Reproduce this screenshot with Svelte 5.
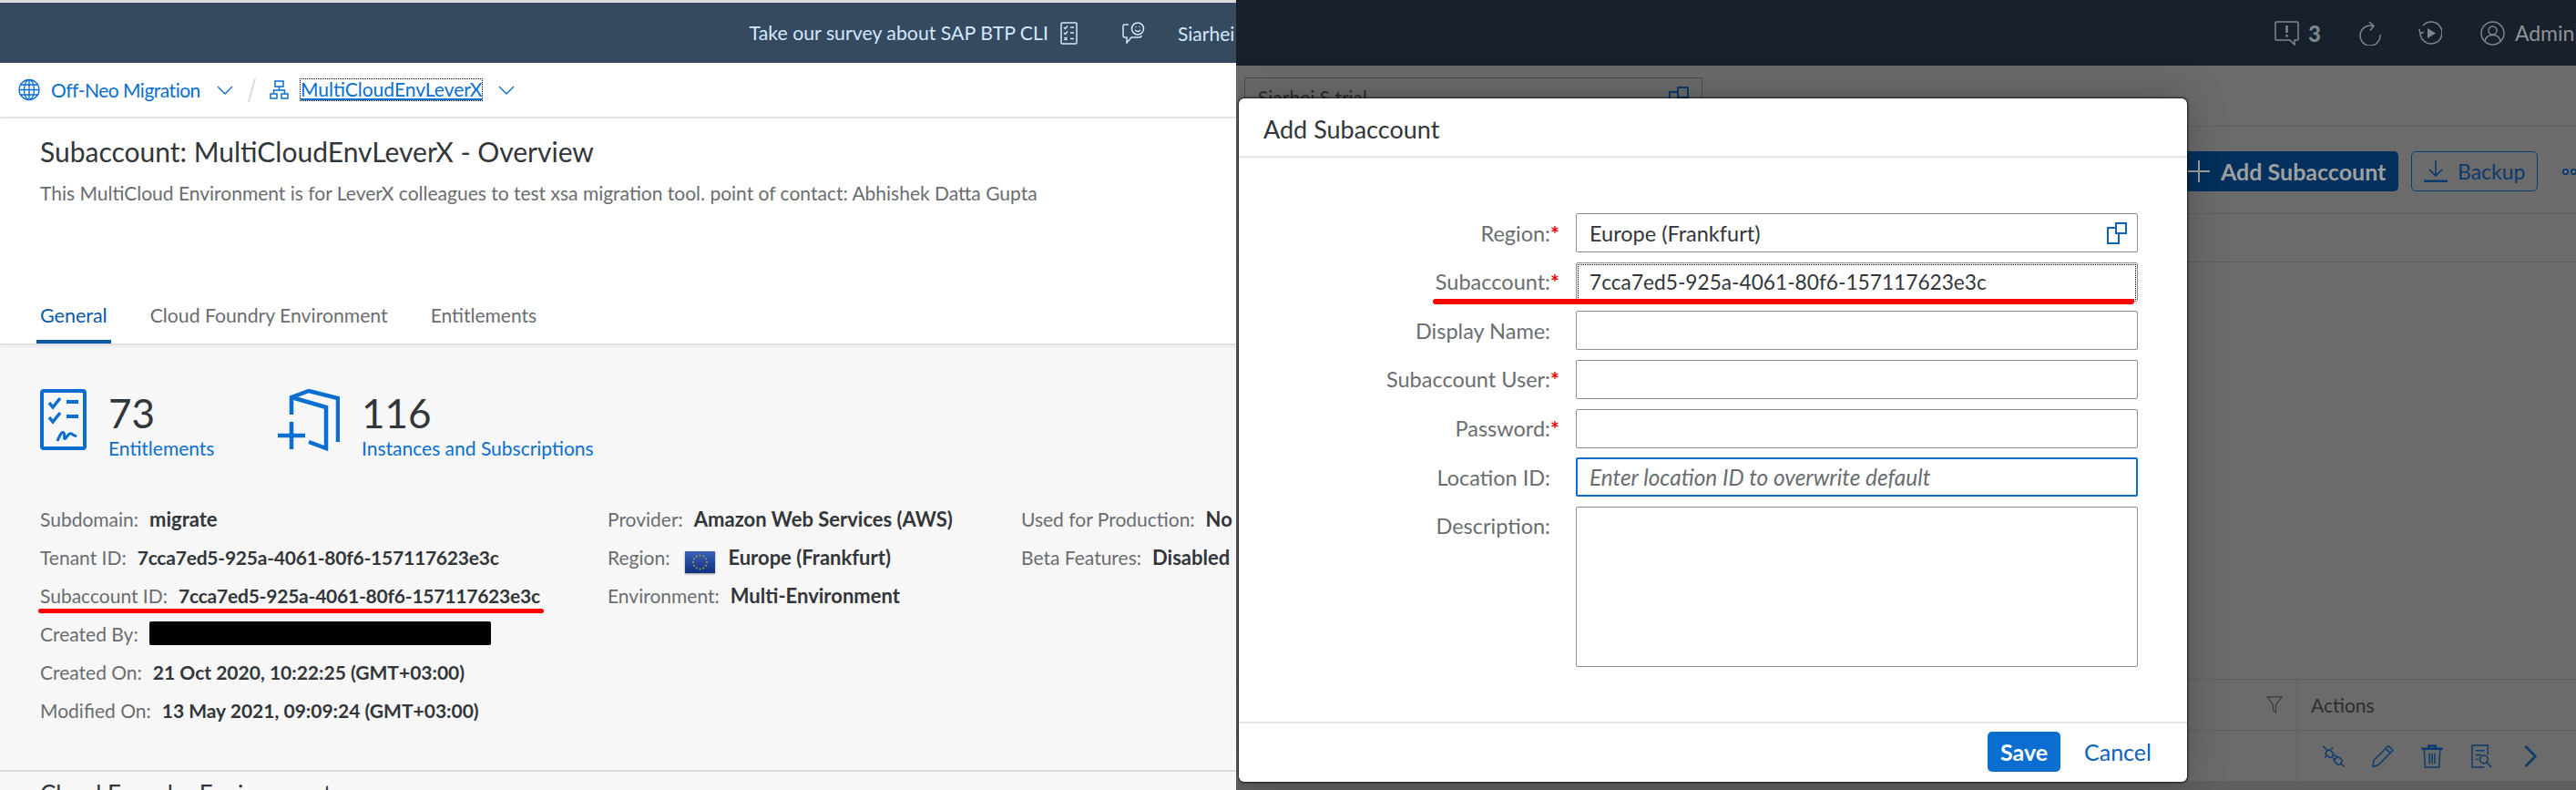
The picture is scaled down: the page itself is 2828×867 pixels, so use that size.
<script lang="ts">
  const stats = [
    { value: '73', label: 'Entitlements', kind: 'list' },
    { value: '116', label: 'Instances and Subscriptions', kind: 'book' },
  ];

  const col1 = [
    ['Subdomain:', 'migrate'],
    ['Tenant ID:', '7cca7ed5-925a-4061-80f6-157117623e3c'],
    ['Subaccount ID:', '7cca7ed5-925a-4061-80f6-157117623e3c'],
    ['Created By:', ''],
    ['Created On:', '21 Oct 2020, 10:22:25 (GMT+03:00)'],
    ['Modified On:', '13 May 2021, 09:09:24 (GMT+03:00)'],
  ];

  const col2 = [
    ['Provider:', 'Amazon Web Services (AWS)'],
    ['Region:', 'Europe (Frankfurt)'],
    ['Environment:', 'Multi-Environment'],
  ];

  const col3 = [
    ['Used for Production:', 'No'],
    ['Beta Features:', 'Disabled'],
  ];

  const fields = [
    { label: 'Region:', req: true, value: 'Europe (Frankfurt)', help: true },
    { label: 'Subaccount:', req: true, value: '7cca7ed5-925a-4061-80f6-157117623e3c', focus: true },
    { label: 'Display Name:' },
    { label: 'Subaccount User:', req: true },
    { label: 'Password:', req: true },
    { label: 'Location ID:', placeholder: 'Enter location ID to overwrite default', active: true },
  ];

  const stars = Array.from({ length: 12 }, (_, i) => {
    const a = (i / 12) * Math.PI * 2;
    return { x: 16.5 + Math.cos(a) * 7.5, y: 12 + Math.sin(a) * 7.5 };
  });

  const isHex = (v: string) => v.startsWith('7cca');
</script>

<div class="page">
  <section class="left">
    <header class="shell">
      <span class="survey">Take our survey about SAP BTP CLI</span>
      <svg class="survey-icon" viewBox="0 0 19 25" fill="none" stroke="currentColor" stroke-width="1.5">
        <rect x="1" y="1" width="17" height="23" rx="1" />
        <path d="M4 6l1.5 1.5L8 4.500M11 6h4M4 12l1.500 1.500L8 10.500M11 12h4M4.500 17l3 3M7.500 17l-3 3M11 18.500h4" />
      </svg>
      <svg class="feedback-icon" viewBox="0 0 26 24" fill="none" stroke="currentColor" stroke-width="1.5">
        <path d="M7 3H2.500Q1 3 1 4.500v11Q1 17 2.500 17H5v6l5-6h9q2 0 2-2" />
        <circle cx="17" cy="7.500" r="6.500" />
        <path d="M14 9q3 3 6 0M14.500 5.500h1M18.500 5.500h1" />
      </svg>
      <span class="user">Siarhei S</span>
    </header>

    <nav class="crumbs">
      <svg class="globe" viewBox="0 0 24 24" fill="none" stroke="#0a6ed1" stroke-width="1.300">
        <circle cx="12" cy="12" r="11" />
        <ellipse cx="12" cy="12" rx="5.500" ry="11" />
        <path d="M1 12h22M2.500 6.500h19M2.500 17.500h19M12 1v22" />
      </svg>
      <a class="crumb first">Off-Neo Migration</a>
      <svg class="chev" viewBox="0 0 18 10" fill="none" stroke="#0a6ed1" stroke-width="1.300"><path d="M1 1l8 8 8-8" /></svg>
      <svg class="slash" viewBox="0 0 9 26" fill="none" stroke="#dcdcdc" stroke-width="2"><path d="M8 0L1 26" /></svg>
      <svg class="tree" viewBox="0 0 21 21" fill="none" stroke="#0a6ed1" stroke-width="1.500">
        <rect x="6" y="1" width="9" height="6" />
        <rect x="1" y="15" width="7" height="5" />
        <rect x="13" y="15" width="7" height="5" />
        <path d="M10.500 7v4M4.500 15v-4h12v4" />
      </svg>
      <a class="crumb current">MultiCloudEnvLeverX</a>
      <svg class="chev" viewBox="0 0 18 10" fill="none" stroke="#0a6ed1" stroke-width="1.300"><path d="M1 1l8 8 8-8" /></svg>
    </nav>

    <div class="hero">
      <h1>Subaccount: MultiCloudEnvLeverX - Overview</h1>
      <p>This MultiCloud Environment is for LeverX colleagues to test xsa migration tool. point of contact: Abhishek Datta Gupta</p>
      <div class="tabs">
        <span class="tab on">General</span>
        <span class="tab">Cloud Foundry Environment</span>
        <span class="tab">Entitlements</span>
      </div>
    </div>

    <main class="general">
      <div class="stats">
        {#each stats as s}
          <div class="stat">
            {#if s.kind === 'list'}
              <svg class="stat-icon list" viewBox="0 0 51 67" fill="none" stroke="#0a6ed1" stroke-width="4">
                <rect x="2" y="2" width="47" height="63" rx="2" />
                <path stroke-width="3.500" d="M10 15l4 5 8-10M10 31l4 5 8-10" />
                <path d="M29 14h13M29 30h13" />
                <path stroke-width="3" d="M19 57c3-7 5-11 7-9s-1 8 2 6c3-4 5-7 8-4l4 2" />
              </svg>
            {:else}
              <svg class="stat-icon book" viewBox="0 0 68 68" fill="none" stroke="#0a6ed1" stroke-width="4.500">
                <path d="M15 28V9L34 2l32 8v48M15 9l38 11v45l-19-7" />
                <path d="M0 51h30M15 36v30" />
              </svg>
            {/if}
            <div class="stat-text">
              <span class="num">{s.value}</span>
              <a class="stat-link">{s.label}</a>
            </div>
          </div>
        {/each}
      </div>

      <div class="details">
        <div class="col">
          {#each col1 as [k, v]}
            <div class="row">
              <span class="key">{k}</span>
              {#if k === 'Created By:'}
                <span class="redacted"></span>
              {:else}
                <span class="val" class:hex={isHex(v)} class:word={v === 'migrate'}>{v}</span>
              {/if}
              {#if k === 'Subaccount ID:'}<i class="redline one"></i>{/if}
            </div>
          {/each}
        </div>
        <div class="col">
          {#each col2 as [k, v]}
            <div class="row">
              <span class="key">{k}</span>
              {#if k === 'Region:'}
                <svg class="flag" viewBox="0 0 33 24">
                  <defs>
                    <linearGradient id="eu" x1="0" y1="0" x2="0" y2="1">
                      <stop offset="0" stop-color="#3a62b8" />
                      <stop offset="1" stop-color="#10307f" />
                    </linearGradient>
                  </defs>
                  <rect width="33" height="24" fill="url(#eu)" />
                  {#each stars as st}<circle cx={st.x} cy={st.y} r="0.900" fill="#b0a844" />{/each}
                </svg>
              {/if}
              <span class="val word">{v}</span>
            </div>
          {/each}
        </div>
        <div class="col">
          {#each col3 as [k, v]}
            <div class="row">
              <span class="key">{k}</span>
              <span class="val word">{v}</span>
            </div>
          {/each}
        </div>
      </div>
    </main>

    <h2 class="next">Cloud Foundry Environment</h2>
  </section>

  <section class="right">
    <header class="cockpit">
      <svg class="c-icon" viewBox="0 0 27 27" fill="none" stroke="currentColor" stroke-width="1.500">
        <path d="M2 1h23q1 0 1 1v18q0 1-1 1h-3v5l-5-5H2q-1 0-1-1V2q0-1 1-1z" />
        <path stroke-width="2.500" d="M13.500 5v8M13.500 15v2.500" />
      </svg>
      <b class="count">3</b>
      <svg class="c-icon refresh" viewBox="0 0 25 27" fill="none" stroke="currentColor" stroke-width="1.500">
        <path d="M16 5.500A11 11 0 1 0 24 15M12 1l5 4.500-4 5" />
      </svg>
      <svg class="c-icon play" viewBox="0 0 26 27" fill="none" stroke="currentColor" stroke-width="1.500">
        <path d="M5 5a12 12 0 1 1-3 9M1 9l1 5 4-2" />
        <path fill="currentColor" stroke="none" d="M10 8l9 5.500-9 5.500z" />
      </svg>
      <svg class="c-icon who" viewBox="0 0 27 27" fill="none" stroke="currentColor" stroke-width="1.500">
        <circle cx="13.500" cy="13.500" r="12.500" />
        <circle cx="13.500" cy="10.500" r="4.500" />
        <path d="M5 22c1-5 4-6.500 8.500-6.500S21 17 22 22" />
      </svg>
      <span class="admin">Administrator</span>
    </header>

    <div class="strip title-strip">
      <div class="ghost-input">
        <span>Siarhei S trial</span>
        <svg viewBox="0 0 24 24" fill="none" stroke="#0b3a6c" stroke-width="2"><rect x="12" y="1" width="11" height="11" /><path d="M12 6H3v17h12V12" /></svg>
      </div>
    </div>

    <div class="strip toolbar">
      <button class="primary">
        <svg viewBox="0 0 24 24" fill="none" stroke="#a0a0a0" stroke-width="2"><path d="M0 12h24M12 0v24" /></svg>
        Add Subaccount
      </button>
      <button class="ghost">
        <svg viewBox="0 0 26 24" fill="none" stroke="#0b3a6c" stroke-width="1.600"><path d="M13 0v16M6 10l7 7 7-7" /><path stroke-width="3" d="M0 23h26" /></svg>
        Backup
      </button>
      <span class="dots"><i></i><i></i></span>
    </div>

    <div class="strip filler"></div>

    <div class="strip tall"></div>

    <div class="strip thead">
      <svg class="filter" viewBox="0 0 18 19" fill="none" stroke="#3c3c3c" stroke-width="1.200"><path d="M.8.800h16.400L10.500 9.500V18L7.500 15V9.500z" /></svg>
      <span class="cell head">Actions</span>
    </div>

    <div class="strip trow">
      <span class="cell acts">
        <svg viewBox="0 0 24 25" fill="none" stroke="#0b3a6c" stroke-width="1.500">
          <path d="M0 1l5 5" />
          <rect x="3.500" y="6.500" width="8" height="6.500" rx="2.500" transform="rotate(40 7.500 9.750)" />
          <path d="M2 14l2-2M9 5l2-2" />
          <rect x="13" y="14" width="8" height="7" rx="3" transform="rotate(40 17 17.500)" />
          <path d="M13 11l2 2M11 14l2 2M20 21l4 3" />
        </svg>
        <svg viewBox="0 0 24 25" fill="none" stroke="#0b3a6c" stroke-width="1.500">
          <path d="M18 1l5 5L7 22l-6 2 1-7zM15 4l5 5" />
        </svg>
        <svg viewBox="0 0 24 27" fill="none" stroke="#0b3a6c" stroke-width="1.500">
          <path stroke-width="2.500" d="M0 5h24M8 4V1.500h8V4" />
          <path d="M3 6l1 20h16l1-20M9 10v12M12 10v12M15 10v12" />
        </svg>
        <svg viewBox="0 0 23 27" fill="none" stroke="#0b3a6c" stroke-width="1.500">
          <path d="M19 12V1H1v25h14M5 7h10M5 12h6M5 17h3" />
          <circle cx="14.500" cy="17" r="4.500" />
          <path d="M18 20.500l5 5.500" />
        </svg>
        <svg class="go" viewBox="0 0 14 24" fill="none" stroke="#0b3a6c" stroke-width="2.500"><path d="M1.500 1l11 11-11 11" /></svg>
      </span>
    </div>

    <div class="strip tail"></div>

    <div class="modal">
      <div class="m-head">Add Subaccount</div>
      <form class="m-body">
        {#each fields as f}
          <label class="m-label" for={f.label}>{f.label}<span class="req">{f.req ? '*' : ''}</span></label>
          <div class="input" class:active={f.active} id={f.label}>
            {#if f.focus}<span class="focus-ring"></span>{/if}
            {#if f.placeholder}
              <span class="hint">{f.placeholder}</span>
            {:else if f.value}
              <span class:hexval={f.focus}>{f.value}</span>
            {/if}
            {#if f.help}
              <svg class="help" viewBox="0 0 24 24" fill="none" stroke="#0a62ba" stroke-width="2">
                <rect x="12" y="1" width="11" height="11" />
                <path d="M12 6H3v17h12V12" />
              </svg>
            {/if}
            {#if f.focus}<i class="redline two"></i>{/if}
          </div>
        {/each}
        <label class="m-label" for="desc">Description:<span class="req"></span></label>
        <div class="input area" id="desc"></div>
      </form>
      <div class="m-foot">
        <button class="save">Save</button>
        <button class="cancel">Cancel</button>
      </div>
    </div>
  </section>
</div>

<style>
  :global(body) {
    margin: 0;
    background: #fff;
  }

  .page {
    display: flex;
    width: 2828px;
    height: 867px;
    overflow: hidden;
    font-family: Lato, "Liberation Sans", sans-serif;
    font-size: 21px;
    color: #32363a;
  }

  .left {
    flex: 0 0 1357px;
    height: 867px;
    overflow: hidden;
    background: #f7f7f7;
    border-top: 3px solid #dcdcdc;
    box-sizing: border-box;
  }

  .shell {
    display: flex;
    align-items: center;
    justify-content: flex-end;
    height: 66px;
    background: #354a5f;
    color: #d1e8ff;
  }

  .survey {
    margin-right: 13px;
    font-size: 21.300px;
  }

  .survey-icon {
    width: 19px;
    height: 25px;
    margin-right: 49px;
  }

  .feedback-icon {
    width: 26px;
    height: 24px;
    margin-right: 35px;
  }

  .user {
    width: 64px;
    overflow: hidden;
    white-space: nowrap;
  }

  .crumbs {
    display: flex;
    align-items: center;
    height: 59px;
    padding-left: 20px;
    background: #fff;
    border-bottom: 2px solid #e5e5e5;
    color: #0a6ed1;
  }

  .globe {
    width: 24px;
    height: 25px;
    margin-right: 12px;
  }

  .crumb {
    white-space: nowrap;
  }

  .crumb.first {
    width: 163px;
    margin-right: 19px;
    letter-spacing: -0.500px;
  }

  .current {
    width: 199px;
    height: 23px;
    line-height: 22px;
    margin-right: 18px;
    text-decoration: underline;
    outline: 1px dotted #000;
  }

  .chev {
    width: 18px;
    height: 10px;
  }

  .slash {
    width: 9px;
    height: 26px;
    margin: 0 15px 0 16px;
  }

  .tree {
    width: 21px;
    height: 21px;
    margin-right: 13px;
  }

  .hero {
    display: flex;
    flex-direction: column;
    height: 248px;
    box-sizing: border-box;
    padding: 18px 0 0 44px;
    background: #fff;
    border-bottom: 1px solid #d9d9d9;
    box-shadow: 0 2px 4px rgba(0, 0, 0, 0.08);
  }

  h1 {
    margin: 0;
    font-size: 30px;
    font-weight: 400;
    line-height: 36px;
  }

  .hero p {
    margin: 14px 0 0;
    line-height: 28px;
    color: #6a6d70;
  }

  .tabs {
    display: flex;
    gap: 39px;
    margin: auto 0 0 -4px;
  }

  .tab {
    height: 58px;
    box-sizing: border-box;
    padding: 13px 4px 0;
    line-height: 28px;
    color: #6a6d70;
    border-bottom: 4px solid transparent;
  }

  .tab:nth-child(2) {
    font-size: 21.200px;
  }

  .tab.on {
    color: #0a5aa8;
    border-color: #0a5aa8;
    font-size: 21.500px;
  }

  .general {
    height: 469px;
    box-sizing: border-box;
    padding: 49px 0 0 44px;
    border-bottom: 2px solid #dcdcdc;
  }

  .stats {
    display: flex;
    height: 73px;
  }

  .stat {
    display: flex;
    gap: 24px;
  }

  .stat:first-child {
    width: 261px;
  }

  .stat-icon.list {
    width: 51px;
    height: 67px;
  }

  .stat-icon.book {
    width: 68px;
    height: 68px;
  }

  .stat-text {
    display: flex;
    flex-direction: column;
  }

  .num {
    font-size: 44px;
    line-height: 52px;
  }

  .stat-link {
    line-height: 26px;
    color: #0a6ed1;
    white-space: nowrap;
  }

  .details {
    display: grid;
    grid-template-columns: 623px 454px 1fr;
    margin-top: 48px;
  }

  .row {
    position: relative;
    display: flex;
    align-items: center;
    height: 42px;
    white-space: nowrap;
  }

  .key {
    margin-right: 12px;
    color: #6a6d70;
  }

  .val {
    font-weight: 700;
  }

  .val.hex {
    letter-spacing: -0.220px;
  }

  .val.word {
    font-size: 22px;
  }

  .redacted {
    width: 375px;
    height: 26px;
    background: #000;
    border-radius: 2px;
  }

  .flag {
    width: 33px;
    height: 24px;
    margin: 12px 14px 0 5px;
    box-shadow: 0 1px 2px rgba(0, 0, 0, 0.4);
  }

  .redline {
    position: absolute;
    display: block;
    background: #ff0000;
    border-radius: 3px;
  }

  .redline.one {
    left: -2px;
    top: 36px;
    width: 555px;
    height: 5px;
  }

  .redline.two {
    left: -158px;
    top: 39px;
    width: 770px;
    height: 6px;
  }

  .next {
    margin: 0;
    padding: 8px 0 0 44px;
    font-size: 26px;
    font-weight: 400;
    line-height: 32px;
  }

  .right {
    position: relative;
    flex: 1;
    min-width: 0;
    height: 867px;
    overflow: hidden;
    background: #6b6b6b;
  }

  .cockpit {
    display: flex;
    align-items: center;
    height: 72px;
    box-sizing: border-box;
    padding: 0 0 0 1140px;
    background: #18202c;
    color: #7d8690;
  }

  .c-icon {
    flex-shrink: 0;
    width: 27px;
    height: 27px;
  }

  .count {
    margin: 0 41px 0 10px;
    font-size: 24px;
    font-weight: 900;
  }

  .refresh {
    width: 25px;
    margin-right: 41px;
  }

  .play {
    width: 26px;
    margin-right: 42px;
  }

  .who {
    margin-right: 11px;
  }

  .admin {
    font-size: 23px;
    white-space: nowrap;
    color: #8f9296;
  }

  .strip {
    box-sizing: border-box;
    border-bottom: 1px solid #5f5f5f;
    background: #6b6b6b;
  }

  .title-strip {
    height: 67px;
    padding: 13px 0 0 9px;
  }

  .ghost-input {
    display: flex;
    align-items: center;
    justify-content: space-between;
    width: 503px;
    height: 43px;
    box-sizing: border-box;
    padding: 0 14px;
    border: 1px solid #4d4d4d;
    color: #2b2b2b;
  }

  .ghost-input svg {
    width: 24px;
    height: 24px;
  }

  .toolbar {
    display: flex;
    align-items: center;
    justify-content: flex-end;
    gap: 14px;
    height: 96px;
    padding-top: 3px;
  }

  .toolbar button {
    display: flex;
    align-items: center;
    height: 44px;
    box-sizing: border-box;
    font: inherit;
    font-size: 23px;
    border-radius: 5px;
  }

  .toolbar .primary {
    width: 235px;
    padding: 0 0 0 4px;
    gap: 12px;
    background: #03305c;
    border: none;
    color: #a0a0a0;
    font-size: 25px;
    font-weight: 700;
  }

  .primary svg {
    width: 24px;
    height: 24px;
  }

  .ghost {
    width: 139px;
    padding: 0 0 0 13px;
    gap: 11px;
    background: transparent;
    border: 1px solid #0b3a6c;
    color: #0b3a6c;
  }

  .ghost svg {
    width: 26px;
    height: 24px;
  }

  .dots {
    display: flex;
    gap: 2px;
    width: 15px;
    margin-left: 13px;
    overflow: hidden;
  }

  .dots i {
    flex-shrink: 0;
    width: 7px;
    height: 7px;
    box-sizing: border-box;
    border: 2px solid #0b3a6c;
    border-radius: 50%;
    background: #8a8a8a;
  }

  .filler {
    height: 53px;
  }

  .tall {
    height: 458px;
  }

  .thead,
  .trow {
    display: flex;
    align-items: center;
    justify-content: flex-end;
    height: 56px;
  }

  .filter {
    width: 18px;
    height: 19px;
    margin-right: 15px;
  }

  .cell {
    display: flex;
    align-items: center;
    width: 307px;
    height: 100%;
    box-sizing: border-box;
    border-left: 1px solid #5f5f5f;
  }

  .head {
    padding-left: 15px;
    color: #2e2e2e;
  }

  .acts {
    gap: 30px;
    padding-left: 28px;
  }

  .acts svg {
    width: 24px;
    height: 26px;
  }

  .acts .go {
    width: 14px;
    height: 24px;
    margin-left: 5px;
  }

  .tail {
    height: 20px;
    border: none;
    background: #5f5f5f;
  }

  .modal {
    position: absolute;
    left: 3px;
    top: 108px;
    display: flex;
    flex-direction: column;
    width: 1041px;
    height: 750px;
    box-sizing: border-box;
    background: #fff;
    border-radius: 6px;
    box-shadow: 0 0 2px 1px rgba(0, 0, 0, 0.7), 0 0 45px rgba(0, 0, 0, 0.25);
  }

  .m-head {
    flex-shrink: 0;
    height: 65px;
    box-sizing: border-box;
    padding: 16px 0 0 27px;
    font-size: 27px;
    line-height: 36px;
    border-bottom: 2px solid #e5e5e5;
    box-shadow: 0 1px 3px rgba(0, 0, 0, 0.06);
  }

  .m-body {
    flex: 1;
    display: grid;
    grid-template-columns: 355px 617px;
    grid-auto-rows: 43px;
    column-gap: 15px;
    row-gap: 10.670px;
    align-content: start;
    padding-top: 61px;
    font-size: 23.500px;
  }

  .m-label {
    align-self: center;
    text-align: right;
    color: #6a6d70;
    white-space: nowrap;
  }

  .req {
    display: inline-block;
    width: 13px;
    color: #e00;
    font-weight: 700;
    text-align: left;
  }

  .input {
    position: relative;
    display: flex;
    align-items: center;
    justify-content: space-between;
    box-sizing: border-box;
    padding: 0 14px;
    border: 1px solid #89919a;
    border-radius: 2px;
  }

  .hexval {
    font-size: 22.700px;
  }

  .input.active {
    border: 2px solid #0a6ed1;
    padding: 0 13px;
  }

  .hint {
    font-style: italic;
    font-size: 24.400px;
    color: #6a6d70;
  }

  .focus-ring {
    position: absolute;
    inset: 2px;
    outline: 1px dotted #000;
    pointer-events: none;
  }

  .help {
    width: 24px;
    height: 24px;
    margin-right: -3px;
  }

  .area {
    grid-row: span 4;
    height: 176px;
  }

  .m-foot {
    flex-shrink: 0;
    display: flex;
    align-items: center;
    height: 66px;
    box-sizing: border-box;
    padding: 0 0 2px 822px;
    border-top: 2px solid #e5e5e5;
  }

  .m-foot button {
    height: 44px;
    font: inherit;
    font-size: 25px;
    border: none;
    border-radius: 5px;
  }

  .m-foot .save {
    width: 80px;
    background: #0a6ed1;
    color: #fff;
    font-weight: 700;
    margin-right: 26px;
  }

  .cancel {
    padding: 0;
    background: transparent;
    color: #0a62ba;
  }
</style>
